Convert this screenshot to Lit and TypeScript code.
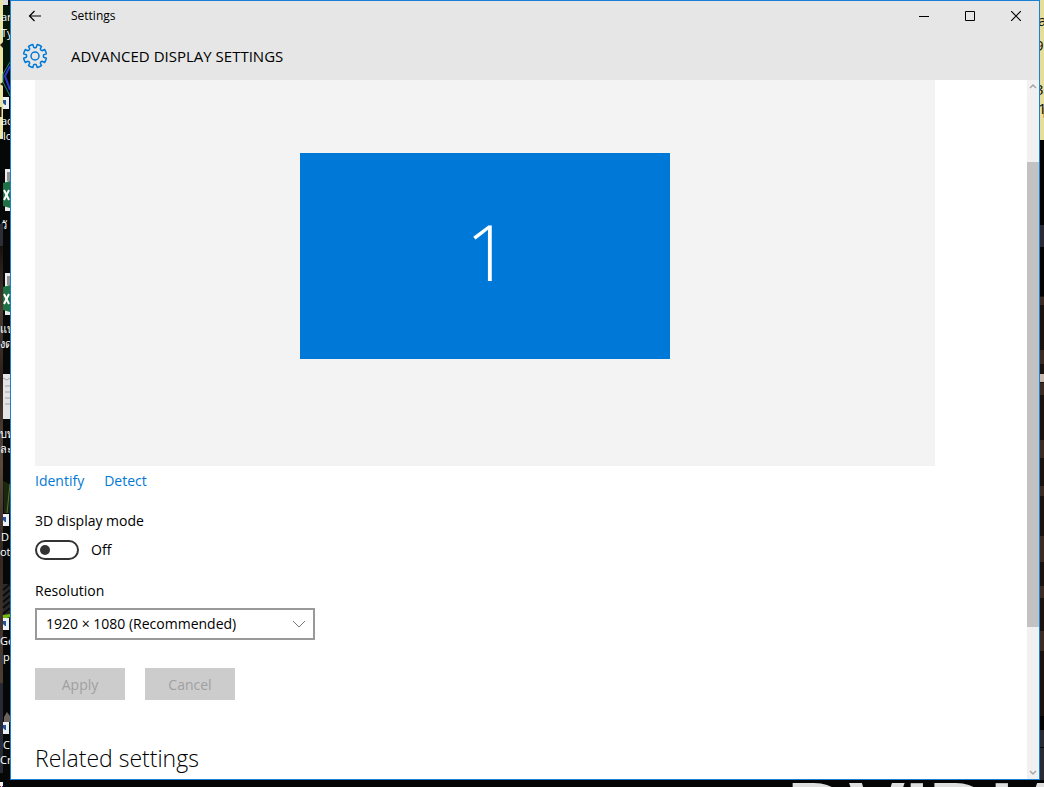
import { LitElement, html, css, svg } from "lit";
import { customElement, state } from "lit/decorators.js";

interface DesktopLabel {
  top: number;
  left: number;
  text: string;
}

const LEFT_LABELS: DesktopLabel[] = [
  { top: 9, left: 1, text: "ar" },
  { top: 25, left: 1, text: "Ty" },
  { top: 113, left: 1, text: "ac" },
  { top: 128, left: 3, text: "lo" },
  { top: 217, left: 1, text: "วั" },
  { top: 321, left: 0, text: "แบ" },
  { top: 336, left: 0, text: "งด" },
  { top: 426, left: 0, text: "บท" },
  { top: 441, left: 0, text: "ละ" },
  { top: 529, left: 1, text: "D" },
  { top: 544, left: 0, text: "ot" },
  { top: 633, left: 0, text: "Ge" },
  { top: 649, left: 3, text: "p" },
  { top: 737, left: 3, text: "C" },
  { top: 752, left: 0, text: "Cr" },
];

const NOTE_LABELS: DesktopLabel[] = [
  { top: 13, left: 1038, text: "a" },
  { top: 38, left: 1035, text: "9" },
  { top: 82, left: 1035, text: "3" },
  { top: 101, left: 1038, text: "1" },
];

const SHORTCUT_TOPS = [97, 514, 618, 722];

function gearPath(cx: number, cy: number, outer: number, inner: number): string {
  const teeth = 8;
  const step = (Math.PI * 2) / teeth;
  const pt = (r: number, a: number) =>
    `${(cx + r * Math.sin(a)).toFixed(2)} ${(cy - r * Math.cos(a)).toFixed(2)}`;
  let d = "";
  for (let i = 0; i < teeth; i++) {
    const a = step * (i + 0.5);
    d += `${i ? "L" : "M"}${pt(inner, a - 0.25)}L${pt(outer, a - 0.2)}`;
    d += `A${outer} ${outer} 0 0 1 ${pt(outer, a + 0.2)}L${pt(inner, a + 0.25)}`;
    d += `Q${pt(inner - 0.9, a + step / 2)} ${pt(inner, a + step - 0.25)}`;
  }
  return d + "Z";
}

@customElement("desktop-backdrop")
export class DesktopBackdrop extends LitElement {
  static styles = css`
    :host {
      display: block;
      position: absolute;
      inset: 0;
      overflow: hidden;
      background: #050505;
    }
    .art {
      position: absolute;
      top: 0;
      height: 787px;
    }
    .left {
      left: 0;
      width: 10px;
    }
    .right {
      right: 0;
      width: 4px;
    }
    .label,
    .note {
      position: absolute;
      font: 11px/15px "Open Sans", "Noto Sans", sans-serif;
      color: #fff;
      white-space: nowrap;
    }
    .note {
      color: #111;
      font-size: 15px;
    }
    .brand {
      position: absolute;
      left: 787px;
      top: 773px;
      font: bold 85px/80px "Liberation Sans", sans-serif;
      color: #dedede;
      white-space: nowrap;
    }
  `;

  render() {
    return html`
      <svg class="art left" viewBox="0 0 10 787" aria-hidden="true">
        <defs>
          <linearGradient id="soil" x1="0" y1="0" x2="0" y2="1">
            <stop offset="0" stop-color="#17110e" />
            <stop offset="0.15" stop-color="#4a3b31" />
            <stop offset="0.3" stop-color="#2c211b" />
            <stop offset="0.5" stop-color="#5c4a3d" />
            <stop offset="0.7" stop-color="#33271f" />
            <stop offset="1" stop-color="#4d3e34" />
          </linearGradient>
        </defs>
        <rect width="10" height="787" fill="#060807" />
        <rect width="3" height="139" fill="#eae5a2" />
        <path d="M3 6h7v60H3z" fill="#03160a" />
        <path d="M3 0h5v5H3z" fill="#d9dde2" />
        <path d="M0 107h1.500v10H0zM0 45l3-3v6zM0 84l3-2v4z" fill="#2b180d" />
        <path d="M10 66L5 76l5 14" fill="none" stroke="#2b3bd0" stroke-width="2" />
        <path d="M10 62L3 74v8l7 14" fill="none" stroke="#1f8f86" />
        <rect y="224" width="3" height="22" fill="#2c2d35" />
        <rect y="246" width="3" height="437" fill="url(#soil)" />
        <rect y="683" width="3" height="90" fill="#272a34" />
        <path d="M5 169h5v42H5z" fill="#e9ecea" />
        <path d="M7 172h3v9H7z" fill="#8e9391" />
        <path d="M3 183l7-2v27l-7-2z" fill="#1d7145" />
        <path d="M4 190l5 10M9 190l-5 10" stroke="#fff" stroke-width="2" />
        <path d="M5 273h5v42H5z" fill="#e9ecea" />
        <path d="M7 276h3v9H7z" fill="#8e9391" />
        <path d="M3 287l7-2v27l-7-2z" fill="#1d7145" />
        <path d="M4 294l5 10M9 294l-5 10" stroke="#fff" stroke-width="2" />
        <path d="M3 374h7v45H3z" fill="#e4e4e4" />
        <path d="M3 378l4 2 3-2M5 386h5M5 392h5M5 398h5M5 404h5" stroke="#a2a2a2" fill="none" />
        <path d="M3 481l7 3v29H4z" fill="#18270e" />
        <path d="M10 484L7 513" stroke="#55763b" />
        <path d="M3 584h7v34H3z" fill="#292929" />
        <path
          d="M3 590l7-6M3 596l7-6M3 602l7-6M3 608l7-6M3 614l7-6"
          stroke="#0b0b0b"
          stroke-width="2"
        />
        <path d="M3 615l7-1v3l-7 2z" fill="#77bc12" />
        <path d="M4 717l3-5 3 4v6H4z" fill="#6b625b" />
        ${SHORTCUT_TOPS.map(
          (y) => svg`
            <rect x="3" y=${y} width="6" height="12" fill="#eceff3" />
            <path d=${`M3 ${y + 3}h3v5h-1l-2-2z`} fill="#21529b" />
          `,
        )}
        <rect y="782" width="3" height="5" fill="#f4f4f4" />
        <path d="M0 786h1v1H0z" fill="#e02020" />
        <path d="M2 786h1v1H2z" fill="#2030e0" />
      </svg>
      <svg class="art right" viewBox="0 0 4 787" aria-hidden="true">
        <rect width="4" height="787" fill="#030303" />
        <rect width="4" height="140" fill="#e5dd9a" />
        <path d="M3 108h1v10H3z" fill="#e8a850" />
        <rect y="225" width="4" height="22" fill="#292a36" />
        <rect y="296" width="4" height="420" fill="#1a120e" />
        <path
          d="M0 297h4v8H0zM0 350h4v14H0zM0 383h4v12H0zM0 440h4v18H0zM0 486h4v10H0zM0 536h4v26H0zM0 586h4v12H0zM0 631h4v20H0z"
          fill="#3a2c24"
        />
        <rect y="374" width="4" height="8" fill="#c6b8ad" />
        <rect y="730" width="4" height="50" fill="#292b34" />
        <rect y="747" width="4" height="1" fill="#08090c" />
      </svg>
      ${LEFT_LABELS.map(
        (l) => html`<span class="label" style="top:${l.top}px;left:${l.left}px">${l.text}</span>`,
      )}
      ${NOTE_LABELS.map(
        (l) => html`<span class="note" style="top:${l.top}px;left:${l.left}px">${l.text}</span>`,
      )}
      <span class="brand">DVIDIA</span>
    `;
  }
}

@customElement("app-root")
export class AppRoot extends LitElement {
  static styles = css`
    :host {
      display: flex;
      box-sizing: border-box;
      position: relative;
      height: 100vh;
      padding: 0 4px 7px 10px;
      overflow: hidden;
      font: 14px/20px "Open Sans", "Noto Sans", sans-serif;
      color: #000;
    }
    * {
      box-sizing: border-box;
    }
    .window {
      position: relative;
      flex: 1;
      min-width: 0;
      display: flex;
      flex-direction: column;
      border: 1px solid #1a80d6;
      background: #fff;
    }
    .top {
      background: #e6e6e6;
    }
    .titlebar,
    .heading {
      display: flex;
      align-items: center;
    }
    .titlebar {
      height: 30px;
    }
    .heading {
      height: 49px;
    }
    .caption {
      flex: 1;
      padding-left: 12px;
      font-size: 12px;
    }
    h1 {
      margin: 0;
      padding-left: 12px;
      font-size: 15px;
      font-weight: 500;
    }
    .chrome {
      display: grid;
      place-items: center;
      width: 46px;
      height: 30px;
      padding: 0;
      border: 0;
      background: none;
    }
    .back,
    .gear {
      display: grid;
      place-items: center;
      width: 48px;
    }
    svg {
      display: block;
      fill: none;
      stroke: #000;
    }
    .gear svg {
      stroke: #0078d7;
      stroke-width: 2;
    }
    .body {
      flex: 1;
      min-height: 0;
      display: flex;
    }
    .content {
      flex: 1;
      min-width: 0;
      overflow: hidden;
      padding: 0 24px;
    }
    .preview {
      max-width: 900px;
      height: 386px;
      padding-top: 73px;
      background: #f3f3f3;
    }
    .monitor {
      display: grid;
      place-items: center;
      width: 370px;
      height: 206px;
      margin: 0 auto;
      padding: 0 0 10px 6px;
      border: 0;
      background: #0078d7;
      color: #fff;
      font: 300 78px/100px "Open Sans", sans-serif;
    }
    .links {
      display: flex;
      gap: 20px;
      padding: 5px 0 20px;
    }
    a {
      color: #0078d7;
      text-decoration: none;
    }
    .field-label {
      display: block;
      margin-bottom: 7px;
    }
    .switch {
      display: flex;
      align-items: center;
      gap: 12px;
      height: 24px;
      margin-bottom: 19px;
    }
    .toggle {
      appearance: none;
      display: flex;
      align-items: center;
      width: 44px;
      height: 20px;
      margin: 0;
      padding: 0 3px;
      border: 2px solid #333;
      border-radius: 10px;
    }
    .toggle::before {
      content: "";
      width: 10px;
      height: 10px;
      border-radius: 5px;
      background: #333;
    }
    .toggle:checked {
      justify-content: flex-end;
      border-color: #0078d7;
      background: #0078d7;
    }
    .toggle:checked::before {
      background: #fff;
    }
    .combo {
      display: grid;
      align-items: center;
      max-width: 280px;
      margin-bottom: 28px;
    }
    .combo > * {
      grid-area: 1 / 1;
    }
    .combo svg {
      justify-self: end;
      margin-right: 9px;
      stroke: #777;
      pointer-events: none;
    }
    select {
      appearance: none;
      width: 100%;
      height: 32px;
      padding: 0 32px 0 9px;
      border: 2px solid #999;
      border-radius: 0;
      background: #fff;
      color: #000;
      font: inherit;
    }
    .actions {
      display: flex;
      gap: 20px;
      margin-bottom: 42px;
    }
    .action {
      width: 90px;
      height: 32px;
      padding: 2px 0 0;
      border: 0;
      background: #ccc;
      color: #a0a0a0;
      font: inherit;
    }
    h2 {
      margin: 0;
      font-size: 23px;
      line-height: 32px;
      font-weight: 300;
    }
    .scrollbar {
      display: flex;
      flex-direction: column;
      width: 12px;
      background: #f1f1f1;
    }
    .scrollbar svg {
      stroke: #a6a6a6;
      stroke-width: 1.5;
    }
    .step {
      display: grid;
      place-items: center;
      width: 12px;
      height: 12px;
      padding: 0;
      border: 0;
      background: none;
    }
    .before {
      flex: 70;
    }
    .thumb {
      flex: 465;
      background: #c2c2c2;
    }
    .after {
      flex: 140;
    }
  `;

  @state() private threeD = false;

  private onToggle(e: Event) {
    this.threeD = (e.target as HTMLInputElement).checked;
  }

  render() {
    return html`
      <desktop-backdrop></desktop-backdrop>
      <div class="window">
        <header class="top">
          <div class="titlebar">
            <button class="chrome back" aria-label="Back">
              <svg width="14" height="12" viewBox="0 0 14 12" stroke-width="1.200">
                <path d="M13 6H1.500M6.500 1l-5 5 5 5" />
              </svg>
            </button>
            <span class="caption">Settings</span>
            <button class="chrome" aria-label="Minimize">
              <svg width="10" height="10" viewBox="0 0 10 10"><path d="M0 5.500h10" /></svg>
            </button>
            <button class="chrome" aria-label="Maximize">
              <svg width="10" height="10" viewBox="0 0 10 10"><path d="M.5.5h9v9h-9z" /></svg>
            </button>
            <button class="chrome" aria-label="Close">
              <svg width="10" height="10" viewBox="0 0 10 10" stroke-width="1.200">
                <path d="M0 0l10 10M10 0L0 10" />
              </svg>
            </button>
          </div>
          <div class="heading">
            <span class="gear">
              <svg width="26" height="26" viewBox="0 0 26 26" aria-hidden="true">
                <path d=${gearPath(13, 13, 11.6, 8.8)} stroke-width="1.500" stroke-linejoin="round" />
                <circle cx="13" cy="13" r="4" stroke-width="1.500" />
              </svg>
            </span>
            <h1>ADVANCED DISPLAY SETTINGS</h1>
          </div>
        </header>
        <div class="body">
          <main class="content">
            <div class="preview"><button class="monitor">1</button></div>
            <nav class="links">
              <a href="#identify">Identify</a>
              <a href="#detect">Detect</a>
            </nav>
            <label class="field-label" for="mode">3D display mode</label>
            <div class="switch">
              <input
                class="toggle"
                id="mode"
                type="checkbox"
                role="switch"
                .checked=${this.threeD}
                @change=${this.onToggle}
              />
              <span>${this.threeD ? "On" : "Off"}</span>
            </div>
            <label class="field-label" for="resolution">Resolution</label>
            <div class="combo">
              <select id="resolution">
                <option>1920 × 1080 (Recommended)</option>
              </select>
              <svg width="14" height="8" viewBox="0 0 14 8" aria-hidden="true">
                <path d="M1 1l6 6 6-6" />
              </svg>
            </div>
            <div class="actions">
              <button class="action" disabled>Apply</button>
              <button class="action" disabled>Cancel</button>
            </div>
            <h2>Related settings</h2>
          </main>
          <div class="scrollbar">
            <button class="step" aria-label="Scroll up">
              <svg width="8" height="6" viewBox="0 0 8 6"><path d="M1 5l3-3 3 3" /></svg>
            </button>
            <div class="before"></div>
            <div class="thumb"></div>
            <div class="after"></div>
            <button class="step" aria-label="Scroll down">
              <svg width="8" height="6" viewBox="0 0 8 6"><path d="M1 1l3 3 3-3" /></svg>
            </button>
          </div>
        </div>
      </div>
    `;
  }
}
